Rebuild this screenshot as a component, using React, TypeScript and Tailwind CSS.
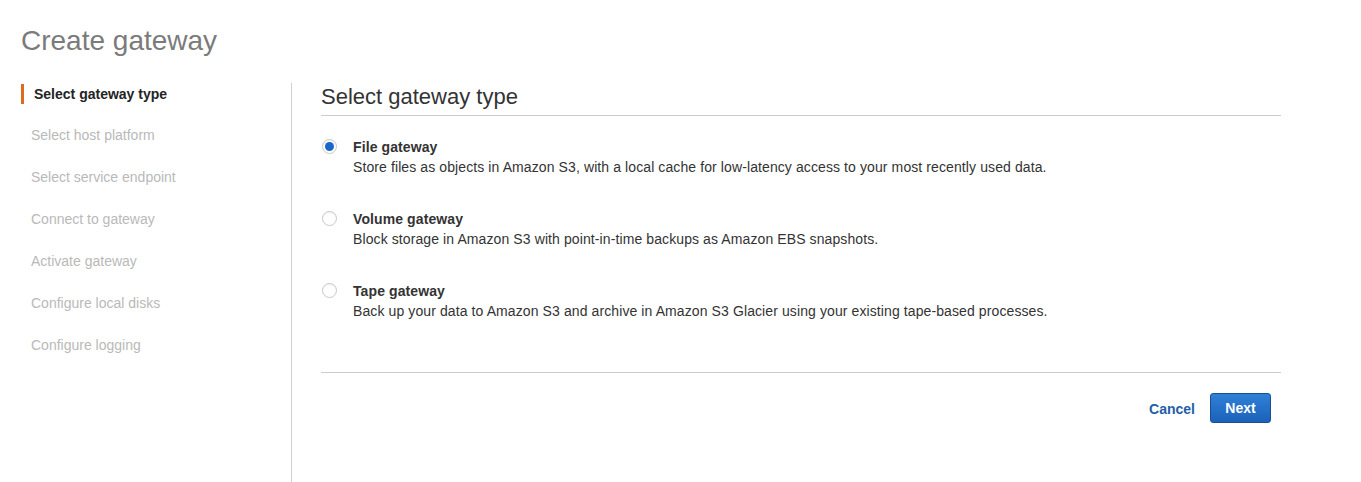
import React, { useState } from "react";

const steps = [
  "Select gateway type",
  "Select host platform",
  "Select service endpoint",
  "Connect to gateway",
  "Activate gateway",
  "Configure local disks",
  "Configure logging",
];

const options = [
  {
    id: "file",
    title: "File gateway",
    desc: "Store files as objects in Amazon S3, with a local cache for low-latency access to your most recently used data.",
  },
  {
    id: "volume",
    title: "Volume gateway",
    desc: "Block storage in Amazon S3 with point-in-time backups as Amazon EBS snapshots.",
  },
  {
    id: "tape",
    title: "Tape gateway",
    desc: "Back up your data to Amazon S3 and archive in Amazon S3 Glacier using your existing tape-based processes.",
  },
];

export default function App() {
  const [selected, setSelected] = useState("file");

  return (
    <div className="min-h-[482px] bg-white pt-[27px] pl-[21px] font-['Liberation_Sans',Arial,sans-serif] text-[14px]">
      <h1 className="text-[28px] leading-none text-[#7b7b7b]">Create gateway</h1>

      <div className="mt-[28px] flex">
        {/* Steps sidebar */}
        <nav className="flex h-[399px] w-[271px] shrink-0 flex-col gap-[22px] border-r border-[#cfcfcf] pt-[1px]">
          {steps.map((s, i) =>
            i === 0 ? (
              <div
                key={s}
                className="-mb-[1px] border-l-[3px] border-[#dd6b20] pl-[10px] leading-[20px] font-bold text-[#232323]"
              >
                {s}
              </div>
            ) : (
              <div key={s} className="pl-[10px] leading-[20px] text-[#b9b9b9]">
                {s}
              </div>
            )
          )}
        </nav>

        {/* Main panel */}
        <main className="w-[960px] pl-[29px] box-content">
          <h2 className="border-b border-[#cccccc] pb-[4px] text-[22px] leading-[28px] text-[#333333]">
            Select gateway type
          </h2>

          <div className="mt-[21px] flex flex-col gap-[32px]">
            {options.map((o) => {
              const on = selected === o.id;
              return (
                <label key={o.id} className="flex cursor-pointer items-start" onClick={() => setSelected(o.id)}>
                  <span className="ml-[1px] mt-[2px] flex h-[15px] w-[15px] shrink-0 items-center justify-center rounded-full border border-[#c8c8c8] bg-white shadow-[inset_0_1px_1px_rgba(0,0,0,0.06)]">
                    {on && <span className="h-[9px] w-[9px] rounded-full bg-[#1b66c9]" />}
                  </span>
                  <span className="ml-[16px] flex flex-col leading-[20px] tracking-[0.1px]">
                    <span className="font-bold text-[#333333]">{o.title}</span>
                    <span className="text-[#333333]">{o.desc}</span>
                  </span>
                </label>
              );
            })}
          </div>

          <div className="mt-[51px] border-t border-[#cccccc]" />

          <div className="mt-[20px] flex items-center justify-end gap-[15px] pr-[10px]">
            <button className="pt-[2px] font-bold text-[#1f5ea8]">Cancel</button>
            <button className="h-[30px] w-[61px] rounded-[3px] border border-[#1b4f8e] bg-gradient-to-b from-[#2f80d8] to-[#1b62b9] font-bold text-white">
              Next
            </button>
          </div>
        </main>
      </div>
    </div>
  );
}
